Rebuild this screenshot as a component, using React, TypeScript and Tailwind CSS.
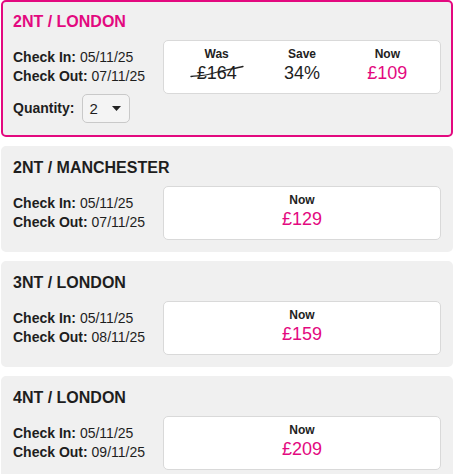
import React from "react";

const PINK = "text-[#e3097f]";

type Deal = {
  title: string;
  checkIn: string;
  checkOut: string;
  now: string;
  was?: string;
  save?: string;
  selected?: boolean;
};

const deals: Deal[] = [
  { title: "2NT / LONDON", checkIn: "05/11/25", checkOut: "07/11/25", was: "£164", save: "34%", now: "£109", selected: true },
  { title: "2NT / MANCHESTER", checkIn: "05/11/25", checkOut: "07/11/25", now: "£129" },
  { title: "3NT / LONDON", checkIn: "05/11/25", checkOut: "08/11/25", now: "£159" },
  { title: "4NT / LONDON", checkIn: "05/11/25", checkOut: "09/11/25", now: "£209" },
];

function PriceCol({ label, children }: { label: string; children: React.ReactNode }) {
  return (
    <div className="flex flex-1 flex-col items-center">
      <div className="text-[12px] leading-[14px] font-bold text-[#222]">{label}</div>
      <div className="text-[18px] leading-[24px]">{children}</div>
    </div>
  );
}

function Card({ d }: { d: Deal }) {
  return (
    <div
      className={
        d.selected
          ? "rounded-[5px] border-2 border-[#e3097f] bg-[#f0f0f0] px-[10px] pt-[10px] pb-[10px]"
          : "rounded-[5px] border-2 border-[#f0f0f0] bg-[#f0f0f0] px-[10px] pt-[10px] pb-[10px]"
      }
    >
      <div
        className={
          d.selected
            ? "text-[16px] leading-[20px] font-bold text-[#e3097f]"
            : "text-[16px] leading-[20px] font-bold text-[#1e1e1e]"
        }
      >
        {d.title}
      </div>
      <div className="mt-[8px] flex items-start">
        <div className="w-[150px] shrink-0 pt-[8px] text-[14px] leading-[19px] text-[#1e1e1e]">
          <div>
            <span className="font-bold">Check In:</span> {d.checkIn}
          </div>
          <div>
            <span className="font-bold">Check Out:</span> {d.checkOut}
          </div>
          {d.selected && (
            <div className="mt-[8px] mb-[2px] flex items-center gap-[8px]">
              <span className="font-bold">Quantity:</span>
              <div className="flex h-[29px] w-[48px] items-center justify-between rounded-[5px] border border-[#c9c9c9] bg-[#f4f4f4] pl-[6px] pr-[8px] text-[15px]">
                <span>2</span>
                <svg width="9" height="5" viewBox="0 0 9 5">
                  <path d="M0 0 L9 0 L4.5 5 Z" fill="#222" />
                </svg>
              </div>
            </div>
          )}
        </div>
        <div className="flex flex-1 rounded-[5px] border border-[#d9d9d9] bg-white px-[10px] pt-[6px] pb-[8px] text-[#1e1e1e]">
          {d.was && (
            <PriceCol label="Was">
              <span className="relative inline-block">
                {d.was}
                <svg
                  className="absolute left-[-7px] top-[3px]"
                  width="54"
                  height="16"
                  viewBox="0 0 54 16"
                >
                  <path
                    d="M1 12.5 C 8 11.5, 14 12, 22 9.5 C 32 6.5, 42 5, 53 2.5"
                    stroke="#222"
                    strokeWidth="1.3"
                    fill="none"
                    strokeLinecap="round"
                  />
                </svg>
              </span>
            </PriceCol>
          )}
          {d.save && <PriceCol label="Save">{d.save}</PriceCol>}
          <PriceCol label="Now">
            <span className={PINK}>{d.now}</span>
          </PriceCol>
        </div>
      </div>
    </div>
  );
}

export default function App() {
  return (
    <div
      className="flex w-[454px] flex-col gap-[9px] bg-white px-[1px]"
      style={{ fontFamily: '"Liberation Sans", Arial, sans-serif' }}
    >
      {deals.map((d) => (
        <Card key={d.title} d={d} />
      ))}
    </div>
  );
}
